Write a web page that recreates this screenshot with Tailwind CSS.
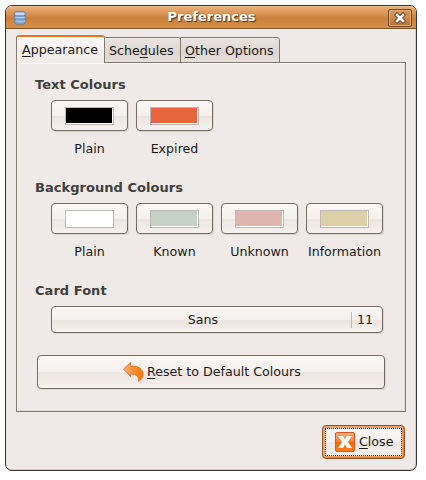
<!DOCTYPE html>
<html lang="en">
<head>
<meta charset="utf-8">
<title>Preferences</title>
<script src="https://cdn.jsdelivr.net/npm/@tailwindcss/browser@4"></script>
</head>
<body class="bg-white w-[426px] h-[480px] overflow-hidden pl-[5px] pt-[5px] font-['DejaVu_Sans',sans-serif] text-[12.65px] leading-4 text-[#1a1a1a] whitespace-nowrap">
<main class="w-[412px] h-[466px] flex flex-col rounded-[7px] border border-[#383432] bg-[#efeae7] overflow-hidden shadow-[inset_-1px_-1px_#d5ccc8]">
  <header class="h-[23px] shrink-0 flex items-center border-b border-[#84552d] bg-linear-to-b from-[#edb47b] via-[#cb803b] via-55% to-[#d59148] shadow-[inset_0_1px_#efbd8c]">
    <svg class="ml-[7px] mt-px w-[14px] h-[14px] shrink-0" viewBox="0 0 14 14">
      <path d="M2.500 .7h8.500l1.300 2-.4 1.800 1 2-.5 2 .5 2.200-2 2.500H3.500L1.500 11l.2-2.300-.7-2 .7-2L1 2.700z" fill="#83aad8" stroke="#5b78a2" stroke-width=".8"/>
      <path d="M2.500 1.500h8.500l.8 1.500-1 1H3L2 3z" fill="#c4d8ec"/>
      <path d="M3 5.800l1 .5h6l1.500-.5M3 9.500l1 .5h6.500l1.500-.5" fill="none" stroke="#c5d9ee"/>
      <path d="M2 4.500l1.500.6h7l1.500-.6M2 8.300l1.500.6h7.500l1.500-.6" fill="none" stroke="#5484bd" stroke-width=".8"/>
    </svg>
    <h1 class="w-[361px] pl-[8px] shrink-0 text-center font-bold text-[13px] text-white [text-shadow:1px_1px_1px_#4b3018]">Preferences</h1>
    <button class="mt-px w-[24px] h-[18px] shrink-0 rounded-[2px] border border-[#794a25] bg-linear-to-b from-[#d99b62] to-[#b97532] shadow-[inset_0_0_0_1px_#e0a871] flex items-center justify-center" aria-label="Close window">
      <svg class="w-[12px] h-[12px]" viewBox="0 0 12 12"><path d="M3 3l6 6M9 3L3 9" stroke="#75451f" stroke-width="4.500" stroke-linecap="square"/><path d="M3 3l6 6M9 3L3 9" stroke="#fff" stroke-width="2.500" stroke-linecap="square"/></svg>
    </button>
  </header>

  <nav class="relative z-10 h-[28px] shrink-0 pl-[10px] pt-[6px] flex items-start">
    <div class="w-[89px] h-[28px] rounded-t-[3px] border border-b-0 border-[#85796b] border-t-2 border-t-[#ee711b] bg-linear-to-b from-[#faf8f7] to-[#efeae7] pl-[5px] pt-[5px]"><u class="underline underline-offset-2">A</u>ppearance</div>
    <div class="-ml-px mt-[2px] w-[77px] h-[26px] rounded-tr-[3px] border border-[#85796b] bg-linear-to-b from-[#eae4e0] via-[#dfd6d0] via-60% to-[#e7dfd9] shadow-[inset_0_1px_#f1edea] pl-[4px] pt-[5px]">Sche<u class="underline underline-offset-2">d</u>ules</div>
    <div class="-ml-px mt-[2px] w-[100px] h-[26px] rounded-tr-[3px] border border-[#85796b] bg-linear-to-b from-[#eae4e0] via-[#dfd6d0] via-60% to-[#e7dfd9] shadow-[inset_0_1px_#f1edea] pl-[4px] pt-[5px]"><u class="underline underline-offset-2">O</u>ther Options</div>
  </nav>

  <section class="ml-[10px] mt-[5px] w-[390px] h-[350px] shrink-0 border border-[#85796b] bg-[#efeae7] shadow-[inset_1px_1px_#fbf9f7,inset_-1px_-1px_#e0dad5] pl-[18px] pt-[14px] flex flex-col">
    <h2 class="h-[23px] shrink-0 font-bold text-[13px] tracking-[0.04px] text-[#3f3f3c]">Text Colours</h2>
    <div class="pl-[16px] flex gap-[8px] text-center">
      <div class="w-[77px]"><div class="h-[31px] rounded-[4px] border border-[#756b60] bg-[linear-gradient(#faf6f3_0%,#f3f0ee_50%,#ede4df_52%,#f5f1ee_100%)] shadow-[1px_1px_#dcd5d0] flex items-center justify-center"><div class="w-[49px] h-[18px] border border-[#bcb9b6] bg-black shadow-[inset_-1px_-1px_#fff]"></div></div><p class="mt-[10px]">Plain</p></div>
      <div class="w-[77px]"><div class="h-[31px] rounded-[4px] border border-[#756b60] bg-[linear-gradient(#faf6f3_0%,#f3f0ee_50%,#ede4df_52%,#f5f1ee_100%)] shadow-[1px_1px_#dcd5d0] flex items-center justify-center"><div class="w-[49px] h-[18px] border border-[#bcb9b6] bg-[#e8643c] shadow-[inset_-1px_-1px_#fff]"></div></div><p class="mt-[10px]">Expired</p></div>
    </div>
    <h2 class="mt-[23px] h-[23px] shrink-0 font-bold text-[13px] tracking-[0.04px] text-[#3f3f3c]">Background Colours</h2>
    <div class="pl-[16px] flex gap-[8px] text-center">
      <div class="w-[77px]"><div class="h-[31px] rounded-[4px] border border-[#756b60] bg-[linear-gradient(#faf6f3_0%,#f3f0ee_50%,#ede4df_52%,#f5f1ee_100%)] shadow-[1px_1px_#dcd5d0] flex items-center justify-center"><div class="w-[49px] h-[18px] border border-[#bcb9b6] bg-white"></div></div><p class="mt-[10px]">Plain</p></div>
      <div class="w-[77px]"><div class="h-[31px] rounded-[4px] border border-[#756b60] bg-[linear-gradient(#faf6f3_0%,#f3f0ee_50%,#ede4df_52%,#f5f1ee_100%)] shadow-[1px_1px_#dcd5d0] flex items-center justify-center"><div class="w-[49px] h-[18px] border border-[#bcb9b6] bg-[#c6d2c6] shadow-[inset_-1px_-1px_#fff]"></div></div><p class="mt-[10px]">Known</p></div>
      <div class="w-[77px]"><div class="h-[31px] rounded-[4px] border border-[#756b60] bg-[linear-gradient(#faf6f3_0%,#f3f0ee_50%,#ede4df_52%,#f5f1ee_100%)] shadow-[1px_1px_#dcd5d0] flex items-center justify-center"><div class="w-[49px] h-[18px] border border-[#bcb9b6] bg-[#dfb6ad] shadow-[inset_-1px_-1px_#fff]"></div></div><p class="mt-[10px]">Unknown</p></div>
      <div class="w-[77px]"><div class="h-[31px] rounded-[4px] border border-[#756b60] bg-[linear-gradient(#faf6f3_0%,#f3f0ee_50%,#ede4df_52%,#f5f1ee_100%)] shadow-[1px_1px_#dcd5d0] flex items-center justify-center"><div class="w-[49px] h-[18px] border border-[#bcb9b6] bg-[#ddcfa8] shadow-[inset_-1px_-1px_#fff]"></div></div><p class="mt-[10px]">Information</p></div>
    </div>
    <h2 class="mt-[23px] h-[23px] shrink-0 font-bold text-[13px] tracking-[0.04px] text-[#3f3f3c]">Card Font</h2>
    <button class="ml-[16px] w-[332px] h-[27px] shrink-0 rounded-[4px] border border-[#756b60] bg-[linear-gradient(#faf6f3_0%,#f3f0ee_51%,#ede4df_53%,#f5f1ee_100%)] shadow-[1px_1px_#dcd5d0] flex items-center"><span class="w-[299px] pl-[3px] text-center">Sans</span><span class="w-px h-[16px] bg-[#bcb9b6]"></span><span class="ml-[5px]">11</span></button>
    <button class="ml-[2px] mt-[22px] w-[348px] h-[34px] shrink-0 rounded-[4px] border border-[#756b60] bg-[linear-gradient(#faf6f3_0%,#f3f0ee_50%,#ede4df_52%,#f5f1ee_100%)] shadow-[1px_1px_#dcd5d0] flex items-center pl-[84px]">
      <svg class="w-[24px] h-[24px]" viewBox="0 0 24 24"><defs><linearGradient id="arrow"><stop stop-color="#ffae73"/><stop offset=".6" stop-color="#fa8a2c"/><stop offset="1" stop-color="#f57900"/></linearGradient></defs><path d="M1.500 9L8.500 2.500v3.700C16 5.500 21 9 21 14.500c0 3-1.500 5-4.500 7 .8-5-2-7.500-8-7.500v2.500z" fill="url(#arrow)" stroke="#e9702f" stroke-width=".9" stroke-linejoin="round"/></svg>
      <span class="ml-px"><u class="underline underline-offset-2">R</u>eset to Default Colours</span>
    </button>
  </section>

  <footer class="mt-[13px] pr-[11px] flex justify-end">
    <button class="w-[83px] h-[34px] rounded-[4px] border border-[#91512b] bg-[#f5a263] shadow-[inset_-1px_-1px_#ed7f31] p-[2px]">
      <span class="h-full border border-dotted border-[#33302d] bg-[linear-gradient(#faf7f5_0%,#f3f0ee_50%,#eee6e1_52%,#f5f1ee_100%)] flex items-center pl-[9px]">
        <svg class="w-[20px] h-[20px] shrink-0" viewBox="0 0 20 20"><defs><linearGradient id="closeTile" x2="0" y2="1"><stop stop-color="#ffad75"/><stop offset=".5" stop-color="#f97d27"/><stop offset=".51" stop-color="#f66308"/><stop offset="1" stop-color="#ff821e"/></linearGradient></defs><rect x=".5" y=".5" width="19" height="19" rx="1.500" fill="url(#closeTile)" stroke="#dc5721"/><path d="M3 4h5l2 3.500L12 4h5l-4 6 4 6h-5l-2-3.500L8 16H3l4-6z" fill="#fff"/></svg>
        <span class="ml-[4px]"><u class="underline underline-offset-2">C</u>lose</span>
      </span>
    </button>
  </footer>
</main>
</body>
</html>
